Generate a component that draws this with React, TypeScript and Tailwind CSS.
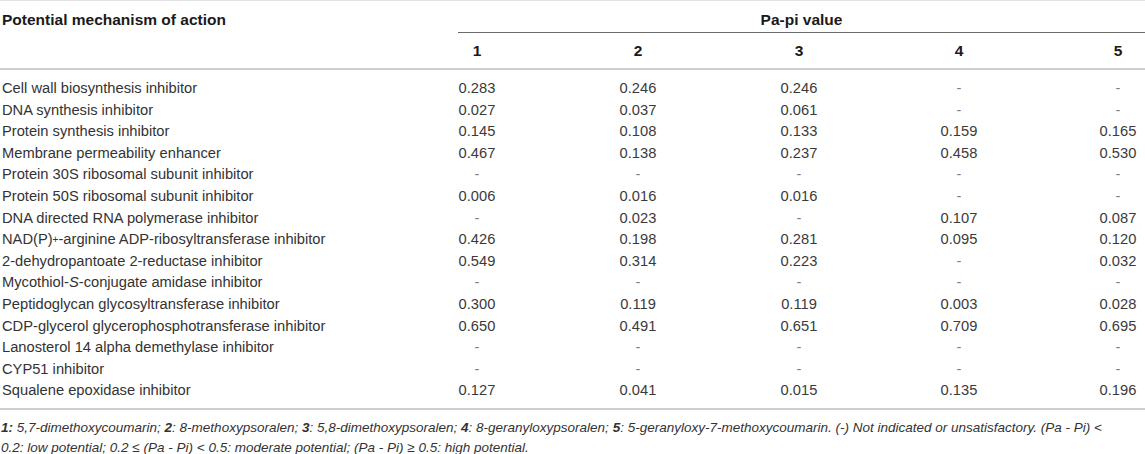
import React from 'react';

type Row = {
  label: React.ReactNode;
  values: string[];
};

const rows: Row[] = [
  { label: 'Cell wall biosynthesis inhibitor', values: ['0.283', '0.246', '0.246', '-', '-'] },
  { label: 'DNA synthesis inhibitor', values: ['0.027', '0.037', '0.061', '-', '-'] },
  { label: 'Protein synthesis inhibitor', values: ['0.145', '0.108', '0.133', '0.159', '0.165'] },
  { label: 'Membrane permeability enhancer', values: ['0.467', '0.138', '0.237', '0.458', '0.530'] },
  { label: 'Protein 30S ribosomal subunit inhibitor', values: ['-', '-', '-', '-', '-'] },
  { label: 'Protein 50S ribosomal subunit inhibitor', values: ['0.006', '0.016', '0.016', '-', '-'] },
  { label: 'DNA directed RNA polymerase inhibitor', values: ['-', '0.023', '-', '0.107', '0.087'] },
  {
    label: (
      <>
        NAD(P)<sup className="text-[10px] relative -top-[1px]">+</sup>-arginine ADP-ribosyltransferase inhibitor
      </>
    ),
    values: ['0.426', '0.198', '0.281', '0.095', '0.120'],
  },
  { label: '2-dehydropantoate 2-reductase inhibitor', values: ['0.549', '0.314', '0.223', '-', '0.032'] },
  {
    label: (
      <>
        Mycothiol-<i>S</i>-conjugate amidase inhibitor
      </>
    ),
    values: ['-', '-', '-', '-', '-'],
  },
  { label: 'Peptidoglycan glycosyltransferase inhibitor', values: ['0.300', '0.119', '0.119', '0.003', '0.028'] },
  { label: 'CDP-glycerol glycerophosphotransferase inhibitor', values: ['0.650', '0.491', '0.651', '0.709', '0.695'] },
  { label: 'Lanosterol 14 alpha demethylase inhibitor', values: ['-', '-', '-', '-', '-'] },
  { label: 'CYP51 inhibitor', values: ['-', '-', '-', '-', '-'] },
  { label: 'Squalene epoxidase inhibitor', values: ['0.127', '0.041', '0.015', '0.135', '0.196'] },
];

const cols = 'grid grid-cols-[397px_160px_162px_160px_160px_106px]';

export default function App() {
  return (
    <div className="w-[1145px] h-[454px] overflow-hidden bg-white font-['Liberation_Sans',Arial,sans-serif] text-[14.7px] text-[#333]">
      {/* header */}
      <div className="border-t border-[#e2e2e2] border-b-2 border-b-[#cfcfcf]">
        <div className={cols}>
          <div className="row-span-2 pl-[2px] pt-[10px] leading-[17px] text-[15.5px] font-bold text-[#1a1a1a] whitespace-nowrap">
            Potential mechanism of action
          </div>
          <div className="col-span-5 ml-[61px] h-[32px] border-b border-[#6b6b6b] pt-[10px] leading-[17px] text-center text-[15.5px] font-bold text-[#1a1a1a]">
            Pa-pi value
          </div>
          {['1', '2', '3', '4'].map((n) => (
            <div key={n} className="h-[35px] pt-[9px] leading-[17px] text-center text-[15.5px] font-bold text-[#1a1a1a]">
              {n}
            </div>
          ))}
          <div className="h-[35px] pt-[9px] pl-[52px] leading-[17px] text-center text-[15.5px] font-bold text-[#1a1a1a]">
            5
          </div>
        </div>
      </div>

      {/* body */}
      <div className="pt-[8px] pb-[6px] border-b-2 border-[#cfcfcf]">
        {rows.map((r, i) => (
          <div key={i} className={`${cols} h-[21.6px] leading-[21.6px]`}>
            <div className="pl-[2px] whitespace-nowrap">{r.label}</div>
            {r.values.map((v, j) => (
              <div
                key={j}
                className={`${j === 4 ? 'pl-[52px]' : ''} text-center ${v === '-' ? 'text-[#808080]' : 'text-[#3a3a3a]'}`}
              >
                {v}
              </div>
            ))}
          </div>
        ))}
      </div>

      {/* footnote */}
      <p className="pt-[8px] pl-[1px] pr-[40px] italic leading-[20px] text-[13.5px] text-[#333]">
        <b>1:</b> 5,7-dimethoxycoumarin; <b>2</b>: 8-methoxypsoralen; <b>3</b>: 5,8-dimethoxypsoralen; <b>4</b>:
        8-geranyloxypsoralen; <b>5</b>: 5-geranyloxy-7-methoxycoumarin. (-) Not indicated or unsatisfactory. (Pa - Pi) &lt;
        0.2: low potential; 0.2 ≤ (Pa - Pi) &lt; 0.5: moderate potential; (Pa - Pi) ≥ 0.5: high potential.
      </p>
    </div>
  );
}
